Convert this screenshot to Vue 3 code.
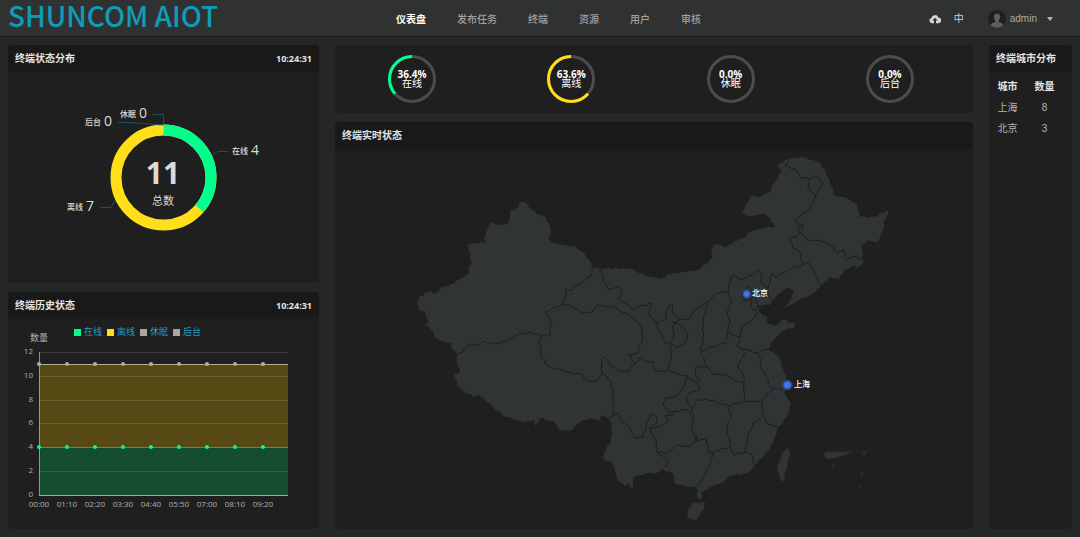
<script setup>
const nav = ['仪表盘', '发布任务', '终端', '资源', '用户', '审核']

const gauges = [
  { label: '在线', value: 36.4, color: '#00ff8c' },
  { label: '离线', value: 63.6, color: '#ffde1a' },
  { label: '休眠', value: 0, color: '#4a4a4a' },
  { label: '后台', value: 0, color: '#4a4a4a' },
]

const cities = [
  { name: '上海', count: 8 },
  { name: '北京', count: 3 },
]

const legend = [
  { label: '在线', color: '#00ff8c' },
  { label: '离线', color: '#ffde1a' },
  { label: '休眠', color: '#a3a8a6' },
  { label: '后台', color: '#a3a8a6' },
]
const times = ['00:00', '01:10', '02:20', '03:30', '04:40', '05:50', '07:00', '08:10', '09:20']
const ticks = [0, 2, 4, 6, 8, 10, 12]
const plotX = (i) => 31 + i * 28
const plotY = (v) => 176 - Math.round((v * 143) / 12)

/* Adds small irregular steps between survey points so borders look natural. */
function rough(text, closed = false) {
  const pts = text.trim().split(/\s+/).map((p) => p.split(',').map(Number))
  if (closed) pts.push(pts[0])
  let d = 'M' + pts[0].join(' ')
  for (let i = 1; i < pts.length; i++) {
    const [x0, y0] = pts[i - 1]
    const [x1, y1] = pts[i]
    const len = Math.hypot(x1 - x0, y1 - y0)
    const n = Math.max(1, Math.floor(len / 3))
    for (let k = 1; k < n; k++) {
      const t = k / n
      const j = Math.sin(x0 * 12.9 + y1 * 7.3 + k * 4.1) * 0.8
      const x = x0 + (x1 - x0) * t - ((y1 - y0) / len) * j
      const y = y0 + (y1 - y0) * t + ((x1 - x0) / len) * j
      d += `L${x.toFixed(1)} ${y.toFixed(1)}`
    }
    d += `L${x1} ${y1}`
  }
  return closed ? d + 'Z' : d
}

const land = [
  `592,267 589,260 584,253 580,251 573,246 565,245 552,243 548,238 551,232 550,227 546,218 542,215 537,214 532,210 527,204
   525,202 520,202 518,207 514,210 510,211 510,218 508,223 503,225 495,224 490,222 487,230 484,238 486,242 480,242 467,245
   469,248 470,257 472,263 468,268 468,274 462,278 448,286 442,286 439,291 433,294 431,291 420,296 417,303 419,310 425,311
   428,323 424,325 429,327 434,332 435,338 442,341 451,343 452,349 457,354 457,362 460,372 454,374 457,385 462,390 474,397
   479,395 493,407 506,417 523,422 534,420 536,427 540,418 554,422 560,430 570,431 578,423 590,418 600,421 602,415 607,418
   612,425 611,440 603,455 604,460 611,461 615,470 617,480 625,486 629,483 632,489 634,477 647,473 657,473 662,469 673,473
   675,483 687,487 695,487 698,490 697,497 700,500 702,497 701,492 713,486 723,482 730,476 747,473 753,468 757,463 768,451
   773,443 778,428 787,417 791,403 787,397 784,392 787,389 788,382 784,372 779,357 768,349 775,338 782,331 795,327 795,323
   789,323 783,319 775,326 768,324 767,317 759,312 758,305 770,305 775,298 783,290 790,288 794,292 791,300 785,308 800,300
   812,294 820,287 830,277 839,280 840,275 853,265 857,268 863,264 862,245 868,240 877,243 883,230 885,220 890,209 875,217
   860,217 857,205 847,198 835,196 830,183 825,170 818,162 803,157 788,159 777,165 782,170 772,187 770,192 760,197 751,196
   742,213 748,216 755,215 763,213 770,218 775,227 760,228 748,233 745,238 735,241 727,247 715,244 711,249 713,257 700,269
   687,272 673,273 659,279 648,276 630,269 600,268 593,268`,
  '788,448 790,453 786,470 783,482 778,473 778,463 783,453',
  '693,503 705,502 703,510 695,521 688,518 688,510',
].map((p) => rough(p, true))

const borders = [
  '592,268 591,276 586,278 583,282 577,285 572,290 566,290 565,297 562,305 545,312 552,322 550,328 551,335 541,336 537,334 530,332 517,335 507,341 494,344 484,341 480,345 469,344 463,352 457,354',
  '562,305 568,305 575,309 581,312 590,313 594,310 597,305 606,307 612,306 622,312 633,317 642,328 643,338 637,353 628,355 635,363 632,366 628,372',
  '541,336 539,343 541,350 542,358 548,366 558,369 570,373 582,374 587,381 597,381 602,372 601,360 605,357 610,365 618,371 628,371',
  '601,372 610,380 613,393 613,410 612,417 605,418',
  '612,417 618,413 622,422 628,426 635,438 643,437 648,420 651,414 655,415 657,422 650,428 652,434 656,440 657,452 668,461 665,468',
  '600,268 605,283 608,289 620,287 622,293 618,298 633,309 652,303 648,313 655,322 665,320 668,305 673,305 672,313 680,319 688,320 695,310 707,302 712,298 717,293 728,292 731,277 735,275 740,280 752,275 758,269 762,275 760,282 768,288 772,273 775,277 792,268 803,265 800,252 793,248 790,237 797,237 800,232 795,220 810,208 816,197 808,188 809,179 800,177 795,169 785,166 789,159',
  '809,179 816,176 823,183 815,196',
  '797,223 803,225 802,229 799,226',
  '800,232 807,240 820,241 830,245 838,253 844,250 846,260 855,256 863,260',
  '803,265 808,262 814,270 821,287',
  '768,288 769,296 773,300',
  '728,292 731,302 727,312 730,322 727,333 726,343 712,347 701,352',
  '707,302 705,313 703,323 703,338 701,352 707,367 713,374 725,375 738,382 744,383',
  '727,333 740,337 742,327 752,320 759,312',
  '742,294 745,290 748,286 752,290 755,294 751,300 745,301 742,298 742,294',
  '752,300 751,308 756,311 758,305 755,297',
  '672,322 680,325 688,333 685,345 675,347 671,343 674,335 672,327 680,319',
  '655,322 662,335 664,342 671,345 671,360 667,370',
  '635,364 640,357 645,361 653,362 655,371 663,372 667,370 675,373 688,377 698,384 699,390 688,394 687,402 692,408 693,418 692,430 697,438 696,441',
  '687,377 683,388 675,397 665,398 663,405 670,412 678,412 683,409 688,410 692,418',
  '707,367 696,367 696,375 699,383',
  '740,337 737,346 745,352 741,360 738,367 743,373 744,383 744,397 745,401',
  '692,408 698,400 706,399 716,402 728,406 745,401 755,402 762,402 763,416 768,424 778,427',
  '728,406 731,415 727,428 729,440 730,447',
  '696,441 706,438 709,453 716,451 730,447 734,455 745,452 752,455 754,465',
  '713,453 710,465 703,478 697,487',
  '745,452 748,437 753,423 762,418',
  '650,428 660,427 668,422 665,415 672,415 677,410',
  '657,453 668,452 676,446 690,446 696,441 694,434',
  '762,402 768,393 773,388 783,391',
  '737,346 748,350 755,353 768,349',
  '748,350 758,354 762,360 760,366 765,373 768,382 772,388',
].map((p) => rough(p))
</script>

<template>
  <div class="page">
    <header class="top">
      <a class="logo" href="#">SHUNCOM AIOT</a>
      <nav class="nav">
        <a v-for="(n, i) in nav" :key="n" href="#" :class="{ active: i === 0 }">{{ n }}</a>
      </nav>
      <div class="tools">
        <button class="plain" aria-label="上传">
          <svg width="12" height="10" viewBox="0 0 12 10">
            <path d="M3 9.200A2.700 2.700 0 0 1 2.400 3.900A3.700 3.700 0 0 1 9.400 3.400A2.900 2.900 0 0 1 9.200 9.200H7V6.600H8.700L6 3.700L3.300 6.600H5V9.200Z" fill="#d5d5d5" />
          </svg>
        </button>
        <button class="plain lang">中</button>
        <button class="plain user">
          <svg width="18" height="18" viewBox="0 0 18 18">
            <circle cx="9" cy="9" r="9" fill="#1f1f1f" />
            <path d="M9 3.500C11.200 3.500 12.300 5 12 7.500C11.800 9 11.200 10 10.700 10.700V12C13 12.500 15 13 15.300 15.300A9 9 0 0 1 2.700 15.300C3 13 5 12.500 7.300 12V10.700C6.800 10 6.200 9 6 7.500C5.700 5 6.800 3.500 9 3.500Z" fill="#5c5e5d" />
          </svg>
          <span>admin</span>
          <svg class="caret" width="6" height="4" viewBox="0 0 6 4"><path d="M0 0H6L3 4Z" fill="#b5b5b5" /></svg>
        </button>
      </div>
    </header>

    <main class="board">
      <div class="col">
        <section class="panel">
          <div class="head"><h2>终端状态分布</h2><time>10:24:31</time></div>
          <svg class="fill" viewBox="0 0 311 211">
            <g fill="none" stroke-width="11">
              <circle cx="155.500" cy="105.500" r="47.500" stroke="#ffde1a" />
              <circle cx="155.500" cy="105.500" r="47.500" stroke="#00ff8c" pathLength="11" stroke-dasharray="4 7" transform="rotate(-90 155.500 105.500)" />
            </g>
            <g class="lead">
              <path d="M145 42.500H155.500V53" />
              <path d="M110 50.500H121L155 53" />
              <path d="M204 83L210 79.500H220" />
              <path d="M107 128L103 135.500H92" />
            </g>
            <g class="cap">
              <text x="112" y="45">休眠</text><text class="num" x="131" y="46">0</text>
              <text x="77" y="53">后台</text><text class="num" x="96" y="54">0</text>
              <text x="224" y="82">在线</text><text class="num" x="243" y="83">4</text>
              <text x="59" y="138">离线</text><text class="num" x="78" y="139">7</text>
            </g>
            <text class="total" x="155" y="112">11</text>
            <text class="total-label" x="155" y="133">总数</text>
          </svg>
        </section>

        <section class="panel">
          <div class="head"><h2>终端历史状态</h2><time>10:24:31</time></div>
          <svg class="fill axis" viewBox="0 0 311 210">
            <g v-for="(l, i) in legend" :key="l.label">
              <rect :x="66 + i * 33" y="10" width="7" height="7" :fill="l.color" />
              <text class="leg" :x="76 + i * 33" y="16">{{ l.label }}</text>
            </g>
            <text class="unit" x="22" y="22">数量</text>
            <rect x="31" :y="plotY(11)" width="249" :height="plotY(4) - plotY(11)" fill="#574913" />
            <rect x="31" :y="plotY(4)" width="249" :height="176 - plotY(4)" fill="#154e2f" />
            <g v-for="t in ticks" :key="t">
              <rect x="31" :y="plotY(t)" width="249" height="1" fill="#fff" fill-opacity="0.130" />
              <text class="right" x="25" :y="plotY(t) + 2">{{ t }}</text>
            </g>
            <rect x="31" y="33" width="1" height="144" fill="#b9c0b5" fill-opacity="0.700" />
            <rect x="31" y="176" width="249" height="1" fill="#9aa8a0" />
            <rect x="31" :y="plotY(11)" width="249" height="1" fill="#b5b08c" />
            <rect x="31" :y="plotY(4)" width="249" height="1" fill="#12b163" />
            <g v-for="(t, i) in times" :key="t">
              <circle :cx="plotX(i)" :cy="plotY(11)" r="2" fill="#aeb0aa" />
              <circle :cx="plotX(i)" :cy="plotY(4)" r="2" fill="#00ff8c" />
              <text class="mid" :x="plotX(i)" y="188">{{ t }}</text>
            </g>
          </svg>
        </section>
      </div>

      <div class="col">
        <section class="panel gauges">
          <div v-for="g in gauges" :key="g.label" class="gauge">
            <svg width="48" height="48" viewBox="0 0 48 48">
              <g fill="none" stroke-width="3" transform="rotate(-90 24 24)">
                <circle cx="24" cy="24" r="22.500" stroke="#4c4c4c" />
                <circle v-if="g.value" cx="24" cy="24" r="22.500" :stroke="g.color" pathLength="100" :stroke-dasharray="g.value + ' 100'" transform="matrix(1 0 0 -1 0 48)" />
              </g>
            </svg>
            <div class="gauge-text"><b>{{ g.value.toFixed(1) }}%</b><span>{{ g.label }}</span></div>
          </div>
        </section>

        <section class="panel">
          <div class="head"><h2>终端实时状态</h2></div>
          <svg class="fill" viewBox="335 149 638 380">
            <defs>
              <radialGradient id="glow">
                <stop offset="0.450" stop-color="#4275f5" />
                <stop offset="1" stop-color="#2c52c4" stop-opacity="0" />
              </radialGradient>
            </defs>
            <path v-for="(d, i) in land" :key="i" :d="d" fill="#303434" />
            <path v-for="(d, i) in borders" :key="i" :d="d" fill="none" stroke="#1d1f1f" stroke-width="1" stroke-linejoin="round" />
            <path d="M824 451.500H870M823.500 452V518H870" fill="none" stroke="#222323" />
            <path d="M824 454L826 452H852L845 455L835 458L828 459L825 457ZM862 452H866L864 456ZM832 466L835 462V465L833 468ZM861 472L863 474L861 477ZM859 485L861 488L859 489ZM827 500L829 502ZM852 502L854 500Z" fill="#303434" />
            <circle cx="746.500" cy="294" r="5" fill="url(#glow)" />
            <circle cx="787.500" cy="385" r="6" fill="url(#glow)" />
            <text class="pin" x="752" y="296">北京</text>
            <text class="pin" x="794" y="387">上海</text>
          </svg>
        </section>
      </div>

      <section class="panel">
        <div class="head"><h2>终端城市分布</h2></div>
        <table>
          <thead><tr><th scope="col">城市</th><th scope="col">数量</th></tr></thead>
          <tbody>
            <tr v-for="c in cities" :key="c.name"><td>{{ c.name }}</td><td>{{ c.count }}</td></tr>
          </tbody>
        </table>
      </section>
    </main>
  </div>
</template>

<style>
body { background: #252727; }
</style>

<style scoped>
.page {
  color: #e4e4e4;
  font: 10px/12px "Liberation Sans", "Noto Sans CJK SC", sans-serif;
}
.top {
  display: grid;
  grid-template-columns: 396px 1fr auto;
  align-items: center;
  height: 36px;
  background: #303231;
  border-bottom: 1px solid #191a1a;
}
.logo {
  padding: 0 0 6px 8px;
  color: #0e9cb8;
  font: 500 28px/30px "Noto Sans CJK SC", sans-serif;
  text-decoration: none;
}
.nav { display: flex; gap: 31px; padding-top: 4px; }
.nav a { color: #a2a3a3; font-weight: 500; text-decoration: none; }
.nav a.active { color: #fff; font-weight: 700; }
.tools { display: flex; align-items: center; gap: 13px; padding: 2px 27px 0 0; }
.plain { display: flex; align-items: center; padding: 0; border: 0; background: none; color: #a9aaaa; font: inherit; }
.lang { color: #d0d0d0; }
.user { gap: 4px; margin-left: 11px; }
.user .caret { margin-left: 6px; }
.board {
  display: grid;
  grid-template-columns: minmax(0, 311fr) minmax(0, 638fr) minmax(0, 83fr);
  gap: 16px;
  padding: 8px;
}
.col { display: flex; flex-direction: column; gap: 9px; }
.panel { overflow: hidden; border-radius: 4px; background: #1f1f1f; }
.head {
  display: flex;
  align-items: center;
  justify-content: space-between;
  height: 27px;
  padding: 0 7px;
  background: #191919;
  white-space: nowrap;
}
h2 { margin: 0; font-size: 10px; line-height: 12px; font-weight: 700; }
time { font: 700 9px/12px "Open Sans", sans-serif; }
.fill { display: block; width: 100%; }
.lead { fill: none; stroke: #14535f; stroke-width: 1; }
.cap { font-size: 8px; fill: #dcdcdc; font-weight: 500; }
.num { font: 400 14px "Open Sans", sans-serif; }
.total { font: 700 30px "Open Sans", sans-serif; fill: #dadada; text-anchor: middle; }
.total-label { font-size: 11px; fill: #dadada; text-anchor: middle; }
.axis { font: 8px "Open Sans", "Noto Sans CJK SC", sans-serif; fill: #b0b2b1; }
.leg { font-size: 9px; fill: #2199cc; }
.unit { font-size: 9px; }
.right { text-anchor: end; }
.mid { text-anchor: middle; }
.gauges { display: flex; justify-content: space-between; padding: 10px 59px 10px 53px; }
.gauge { display: grid; place-items: center; }
.gauge svg, .gauge-text { grid-area: 1 / 1; }
.gauge-text { display: flex; flex-direction: column; align-items: center; color: #fff; line-height: 10px; }
.gauge-text b { font-family: "Open Sans", sans-serif; }
.pin { font-size: 8px; font-weight: 500; fill: #fff; }
table { width: 100%; margin-top: 4px; padding-right: 9px; border-spacing: 0; color: #b4b5b5; text-align: center; }
th, td { width: 50%; height: 21px; padding: 0; }
th { color: #e4e4e4; }
</style>
